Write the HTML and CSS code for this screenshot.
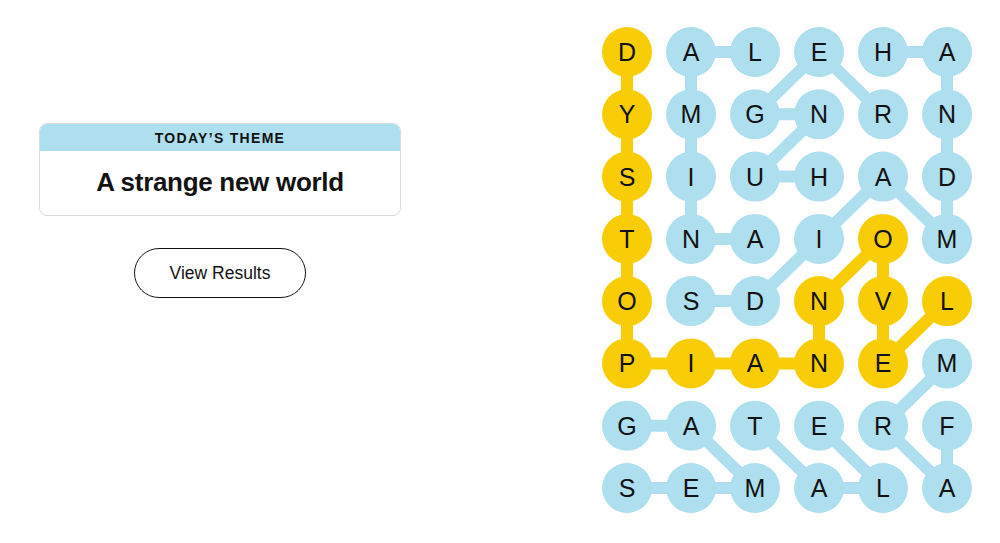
FILE: index.html
```html
<!DOCTYPE html>
<html lang="en">
<head>
<meta charset="utf-8">
<title>Strands</title>
<link rel="stylesheet" href="styles.css">
</head>
<body>
<main class="page">
  <section class="left">
    <div class="theme-card">
      <div class="theme-head">TODAY’S THEME</div>
      <div class="theme-body">A strange new world</div>
    </div>
    <button class="results-btn">View Results</button>
  </section>
  <section class="board">
    <svg class="grid" width="410" height="543" viewBox="0 0 410 543" xmlns="http://www.w3.org/2000/svg">
      <g class="blue-lines">
        <!-- ANIMAL -->
        <line x1="165" y1="238.9" x2="101" y2="238.9"/>
        <line x1="101" y1="238.9" x2="101" y2="52"/>
        <line x1="101" y1="52" x2="165" y2="52"/>
        <!-- HANDMAIDS -->
        <line x1="293" y1="52" x2="357" y2="52"/>
        <line x1="357" y1="52" x2="357" y2="238.9"/>
        <line x1="357" y1="238.9" x2="293" y2="176.6"/>
        <line x1="293" y1="176.6" x2="229" y2="238.9"/>
        <line x1="229" y1="238.9" x2="165" y2="301.1"/>
        <line x1="165" y1="301.1" x2="101" y2="301.1"/>
        <!-- HUNGER -->
        <line x1="229" y1="176.6" x2="165" y2="176.6"/>
        <line x1="165" y1="176.6" x2="229" y2="114.3"/>
        <line x1="229" y1="114.3" x2="165" y2="114.3"/>
        <line x1="165" y1="114.3" x2="229" y2="52"/>
        <line x1="229" y1="52" x2="293" y2="114.3"/>
        <!-- GAMES -->
        <line x1="37" y1="425.7" x2="101" y2="425.7"/>
        <line x1="101" y1="425.7" x2="165" y2="488"/>
        <line x1="165" y1="488" x2="37" y2="488"/>
        <!-- TALE -->
        <line x1="165" y1="425.7" x2="229" y2="488"/>
        <line x1="229" y1="488" x2="293" y2="488"/>
        <line x1="293" y1="488" x2="229" y2="425.7"/>
        <!-- FARM -->
        <line x1="357" y1="425.7" x2="357" y2="488"/>
        <line x1="357" y1="488" x2="293" y2="425.7"/>
        <line x1="293" y1="425.7" x2="357" y2="363.4"/>
      </g>
      <g class="yellow-lines">
        <line x1="37" y1="52" x2="37" y2="363.4"/>
        <line x1="37" y1="363.4" x2="229" y2="363.4"/>
        <line x1="229" y1="363.4" x2="229" y2="301.1"/>
        <line x1="229" y1="301.1" x2="293" y2="238.9"/>
        <line x1="293" y1="238.9" x2="293" y2="363.4"/>
        <line x1="293" y1="363.4" x2="357" y2="301.1"/>
      </g>
      <g class="dots">
        <circle class="y" cx="37" cy="52" r="25"/><circle cx="101" cy="52" r="25"/><circle cx="165" cy="52" r="25"/><circle cx="229" cy="52" r="25"/><circle cx="293" cy="52" r="25"/><circle cx="357" cy="52" r="25"/>
        <circle class="y" cx="37" cy="114.3" r="25"/><circle cx="101" cy="114.3" r="25"/><circle cx="165" cy="114.3" r="25"/><circle cx="229" cy="114.3" r="25"/><circle cx="293" cy="114.3" r="25"/><circle cx="357" cy="114.3" r="25"/>
        <circle class="y" cx="37" cy="176.6" r="25"/><circle cx="101" cy="176.6" r="25"/><circle cx="165" cy="176.6" r="25"/><circle cx="229" cy="176.6" r="25"/><circle cx="293" cy="176.6" r="25"/><circle cx="357" cy="176.6" r="25"/>
        <circle class="y" cx="37" cy="238.9" r="25"/><circle cx="101" cy="238.9" r="25"/><circle cx="165" cy="238.9" r="25"/><circle cx="229" cy="238.9" r="25"/><circle class="y" cx="293" cy="238.9" r="25"/><circle cx="357" cy="238.9" r="25"/>
        <circle class="y" cx="37" cy="301.1" r="25"/><circle cx="101" cy="301.1" r="25"/><circle cx="165" cy="301.1" r="25"/><circle class="y" cx="229" cy="301.1" r="25"/><circle class="y" cx="293" cy="301.1" r="25"/><circle class="y" cx="357" cy="301.1" r="25"/>
        <circle class="y" cx="37" cy="363.4" r="25"/><circle class="y" cx="101" cy="363.4" r="25"/><circle class="y" cx="165" cy="363.4" r="25"/><circle class="y" cx="229" cy="363.4" r="25"/><circle class="y" cx="293" cy="363.4" r="25"/><circle cx="357" cy="363.4" r="25"/>
        <circle cx="37" cy="425.7" r="25"/><circle cx="101" cy="425.7" r="25"/><circle cx="165" cy="425.7" r="25"/><circle cx="229" cy="425.7" r="25"/><circle cx="293" cy="425.7" r="25"/><circle cx="357" cy="425.7" r="25"/>
        <circle cx="37" cy="488" r="25"/><circle cx="101" cy="488" r="25"/><circle cx="165" cy="488" r="25"/><circle cx="229" cy="488" r="25"/><circle cx="293" cy="488" r="25"/><circle cx="357" cy="488" r="25"/>
      </g>
      <g class="letters">
        <text x="37" y="61">D</text><text x="101" y="61">A</text><text x="165" y="61">L</text><text x="229" y="61">E</text><text x="293" y="61">H</text><text x="357" y="61">A</text>
        <text x="37" y="123.3">Y</text><text x="101" y="123.3">M</text><text x="165" y="123.3">G</text><text x="229" y="123.3">N</text><text x="293" y="123.3">R</text><text x="357" y="123.3">N</text>
        <text x="37" y="185.6">S</text><text x="101" y="185.6">I</text><text x="165" y="185.6">U</text><text x="229" y="185.6">H</text><text x="293" y="185.6">A</text><text x="357" y="185.6">D</text>
        <text x="37" y="247.9">T</text><text x="101" y="247.9">N</text><text x="165" y="247.9">A</text><text x="229" y="247.9">I</text><text x="293" y="247.9">O</text><text x="357" y="247.9">M</text>
        <text x="37" y="310.1">O</text><text x="101" y="310.1">S</text><text x="165" y="310.1">D</text><text x="229" y="310.1">N</text><text x="293" y="310.1">V</text><text x="357" y="310.1">L</text>
        <text x="37" y="372.4">P</text><text x="101" y="372.4">I</text><text x="165" y="372.4">A</text><text x="229" y="372.4">N</text><text x="293" y="372.4">E</text><text x="357" y="372.4">M</text>
        <text x="37" y="434.7">G</text><text x="101" y="434.7">A</text><text x="165" y="434.7">T</text><text x="229" y="434.7">E</text><text x="293" y="434.7">R</text><text x="357" y="434.7">F</text>
        <text x="37" y="497">S</text><text x="101" y="497">E</text><text x="165" y="497">M</text><text x="229" y="497">A</text><text x="293" y="497">L</text><text x="357" y="497">A</text>
      </g>
    </svg>
  </section>
</main>
</body>
</html>
```

FILE: styles.css
```css
* { box-sizing: border-box; }

html, body {
  margin: 0;
  padding: 0;
  background: #ffffff;
}

body {
  font-family: "Liberation Sans", Arial, sans-serif;
  color: #121212;
  width: 1000px;
  height: 543px;
  overflow: hidden;
}

.page {
  display: flex;
  width: 1000px;
  height: 543px;
}

.left {
  width: 590px;
  flex: 0 0 590px;
  padding: 123px 0 0 39px;
  display: flex;
  flex-direction: column;
}

.theme-card {
  width: 362px;
  height: 93px;
  border: 1px solid #dcdcdc;
  border-radius: 8px;
  overflow: hidden;
  display: flex;
  flex-direction: column;
}

.theme-head {
  height: 27px;
  background: #aedfee;
  font-size: 14px;
  font-weight: 700;
  letter-spacing: 1.3px;
  text-align: center;
  line-height: 28px;
  color: #121212;
}

.theme-body {
  flex: 1;
  display: flex;
  align-items: center;
  justify-content: center;
  font-size: 26px;
  font-weight: 700;
  letter-spacing: -0.3px;
  padding-bottom: 2px;
}

.results-btn {
  align-self: flex-start;
  margin: 32px 0 0 95px;
  width: 172px;
  height: 50px;
  border: 1px solid #121212;
  border-radius: 25px;
  background: #ffffff;
  font-family: "Liberation Sans", Arial, sans-serif;
  font-size: 17.5px;
  color: #121212;
  padding: 0;
  cursor: pointer;
}

.board {
  flex: 0 0 410px;
  width: 410px;
}

.grid {
  display: block;
}

.blue-lines line {
  stroke: #aedfee;
  stroke-width: 12;
}

.yellow-lines line {
  stroke: #f8cd05;
  stroke-width: 12;
}

.dots circle {
  fill: #aedfee;
}

.dots circle.y {
  fill: #f8cd05;
}

.letters text {
  font-family: "Liberation Sans", Arial, sans-serif;
  font-size: 25px;
  text-anchor: middle;
  fill: #121212;
}
```
